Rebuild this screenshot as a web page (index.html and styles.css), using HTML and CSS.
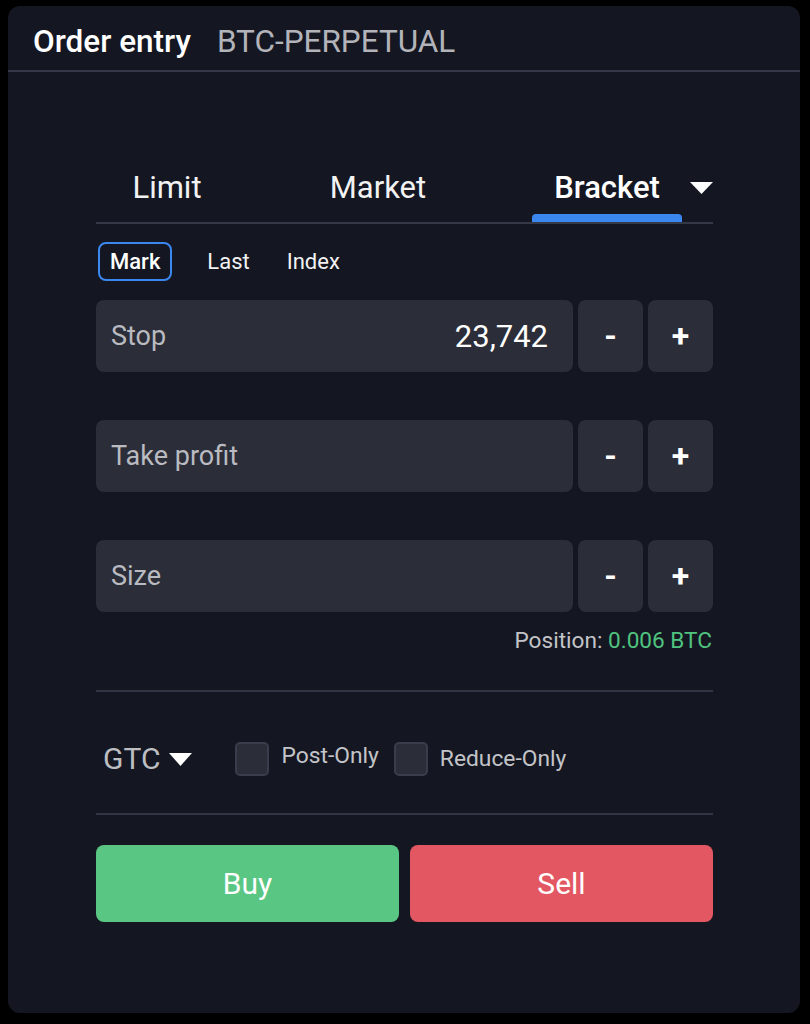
FILE: index.html
```html
<!DOCTYPE html>
<html>
<head>
<meta charset="utf-8">
<link rel="stylesheet" href="styles.css">
</head>
<body>
<div class="card">
  <div class="header">
    <span class="title">Order entry</span>
    <span class="symbol">BTC-PERPETUAL</span>
  </div>
  <div class="content">
    <div class="tabs">
      <div class="tab tab-limit"><span class="tab-label">Limit</span><span class="tab-bar"></span></div>
      <div class="tab tab-market"><span class="tab-label">Market</span><span class="tab-bar"></span></div>
      <div class="tab tab-bracket active"><span class="tab-label">Bracket</span><span class="tab-bar"></span></div>
      <svg class="caret" width="23" height="12" viewBox="0 0 23 12"><path d="M0 0 H23 L11.5 12 Z" fill="#fff"/></svg>
    </div>
    <div class="triggers">
      <span class="trigger active">Mark</span>
      <span class="trigger">Last</span>
      <span class="trigger">Index</span>
    </div>
    <div class="field-row">
      <div class="field"><span class="field-label">Stop</span><span class="field-value">23,742</span></div>
      <div class="step">-</div>
      <div class="step">+</div>
    </div>
    <div class="field-row spaced">
      <div class="field"><span class="field-label">Take profit</span></div>
      <div class="step">-</div>
      <div class="step">+</div>
    </div>
    <div class="field-row spaced">
      <div class="field"><span class="field-label">Size</span></div>
      <div class="step">-</div>
      <div class="step">+</div>
    </div>
    <div class="position">Position: <span class="pos-value">0.006 BTC</span></div>
    <div class="divider first"></div>
    <div class="options">
      <div class="tif">GTC<svg class="tif-caret" width="23" height="13" viewBox="0 0 23 13"><path d="M0 0 H23 L11.5 13 Z" fill="#fff"/></svg></div>
      <label class="check"><span class="box"></span><span class="check-label">Post-Only</span></label>
      <label class="check"><span class="box"></span><span class="check-label reduce">Reduce-Only</span></label>
    </div>
    <div class="divider"></div>
    <div class="actions">
      <div class="btn buy">Buy</div>
      <div class="btn sell">Sell</div>
    </div>
  </div>
</div>
</body>
</html>
```

FILE: styles.css
```css
* { box-sizing: border-box; }
html, body {
  margin: 0;
  padding: 0;
  background: #000;
}
body {
  font-family: Roboto, "Liberation Sans", sans-serif;
  color: #fff;
}
.card {
  margin: 6px 10px 0 8px;
  width: 792px;
  height: 1007px;
  background: #141722;
  border-radius: 12px;
  overflow: hidden;
}
.header {
  height: 66px;
  padding: 18px 0 0 25px;
  border-bottom: 2px solid #353848;
  display: flex;
  align-items: flex-start;
  gap: 26px;
  line-height: 36px;
}
.title {
  font-size: 31.5px;
  font-weight: 500;
  color: #fff;
}
.symbol {
  font-size: 31.5px;
  color: #b3b4ba;
}
.content {
  padding: 98px 87px 0 88px;
}
.tabs {
  display: flex;
  align-items: flex-start;
  border-bottom: 2px solid #353846;
  height: 54px;
}
.tab {
  width: 150px;
  display: flex;
  flex-direction: column;
  align-items: center;
}
.tab-label {
  font-size: 31px;
  line-height: 36px;
  color: #f2f2f2;
}
.tab-bar {
  margin-top: 8px;
  width: 150px;
  height: 8px;
  border-radius: 4px 4px 0 0;
}
.tab-limit { margin-left: -4px; }
.tab-market { margin-left: 61px; }
.tab-bracket { margin-left: 79px; }
.tab.active .tab-label {
  font-weight: 500;
  color: #fff;
}
.tab.active .tab-bar { background: #3b87f0; }
.caret {
  margin: 12px 0 0 8px;
}
.triggers {
  display: flex;
  align-items: center;
  gap: 13px;
  margin-top: 18px;
  padding-left: 2px;
}
.trigger {
  font-size: 22px;
  line-height: 35px;
  padding: 0 10px;
  border: 2px solid transparent;
  border-radius: 8px;
  color: #f2f2f2;
}
.trigger.active {
  border-color: #3b87f0;
  font-weight: 500;
  color: #fff;
  margin-right: 10px;
}
.field-row {
  display: flex;
  gap: 5px;
  margin-top: 19px;
  height: 72px;
}
.field-row.spaced { margin-top: 48px; }
.field {
  flex: 1;
  background: #2b2e38;
  border-radius: 8px;
  display: flex;
  align-items: center;
  justify-content: space-between;
  padding: 0 25px 0 15px;
}
.field-label {
  font-size: 27px;
  color: #b9bbc1;
}
.field-value {
  font-size: 31px;
  color: #fff;
}
.step {
  width: 65px;
  background: #2b2e38;
  border-radius: 8px;
  display: flex;
  align-items: center;
  justify-content: center;
  font-size: 32px;
  font-weight: 700;
  color: #fff;
}
.position {
  margin-top: 17px;
  text-align: right;
  font-size: 22.6px;
  line-height: 24px;
  color: #c3c4c8;
  padding-right: 1px;
}
.pos-value { color: #4fc37f; }
.divider {
  height: 2px;
  background: #323545;
}
.divider.first { margin-top: 37px; }
.options {
  height: 121px;
  display: flex;
  align-items: center;
  padding: 12px 0 0 7px;
}
.tif {
  display: flex;
  align-items: center;
  font-size: 30px;
  color: #bdbec2;
  gap: 9px;
  margin-right: 43px;
}
.tif-caret { margin-top: 2px; }
.check {
  display: flex;
  align-items: center;
  gap: 12px;
  margin-right: 15px;
}
.box {
  width: 34px;
  height: 34px;
  background: #2b2e38;
  border: 2px solid #393c4a;
  border-radius: 5px;
}
.check-label {
  font-size: 22.8px;
  color: #c3c4c8;
  margin-top: -6px;
}
.check-label.reduce { margin-top: 0; }
.actions {
  display: flex;
  gap: 11px;
  margin-top: 30px;
}
.btn {
  flex: 1;
  height: 77px;
  border-radius: 8px;
  display: flex;
  align-items: center;
  justify-content: center;
  font-size: 30px;
  color: #fff;
}
.buy { background: #5ac683; }
.sell { background: #e35763; }
```
